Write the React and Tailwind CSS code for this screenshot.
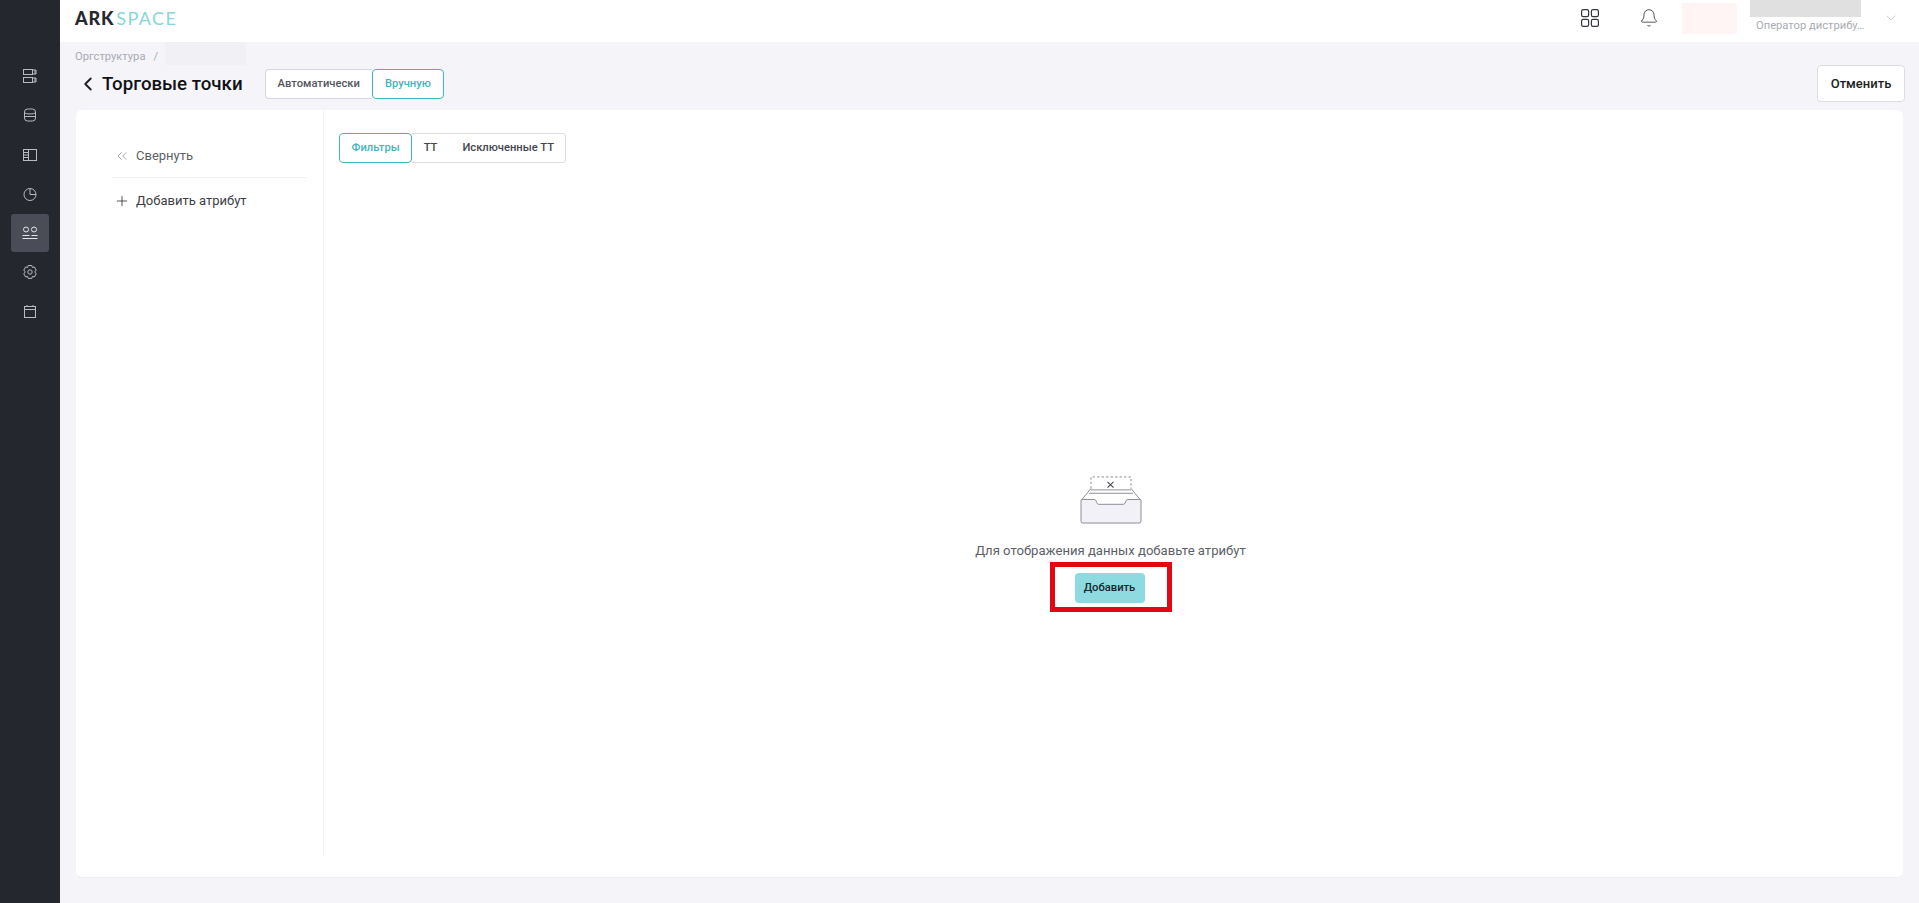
import { Bell, ChevronDown, ChevronLeft, ChevronsLeft, Plus } from "lucide-react";

const font = { fontFamily: "Roboto, sans-serif" };

function RowsIcon() {
  return (
    <svg width="18" height="18" viewBox="0 0 18 18" fill="none" stroke="currentColor" strokeWidth="1">
      <rect x="2.5" y="2.5" width="9" height="5" />
      <rect x="2.5" y="10.5" width="9" height="5" />
      <path d="M12 3h3v4h-3M12 11h3v4h-3M14 3v4M14 11v4" />
    </svg>
  );
}

function DbIcon() {
  return (
    <svg width="18" height="18" viewBox="0 0 18 18" fill="none" stroke="currentColor" strokeWidth="1">
      <rect x="3.5" y="3" width="11" height="12" rx="3" />
      <path d="M3.5 7c2 1.3 9 1.3 11 0M3.5 10.5h11" />
    </svg>
  );
}

function PanelIcon() {
  return (
    <svg width="18" height="18" viewBox="0 0 18 18" fill="none" stroke="currentColor" strokeWidth="1">
      <rect x="2.5" y="3.5" width="13" height="11" />
      <path d="M7.5 3.5v11M3 6.5h4M3 9h4M3 11.5h4" />
    </svg>
  );
}

function PieIcon() {
  return (
    <svg width="18" height="18" viewBox="0 0 18 18" fill="none" stroke="currentColor" strokeWidth="1">
      <circle cx="9" cy="9.5" r="6" />
      <path d="M9 3.5v6h6" />
    </svg>
  );
}

function UsersIcon() {
  return (
    <svg width="18" height="18" viewBox="0 0 18 18" fill="none" stroke="currentColor" strokeWidth="1">
      <circle cx="5" cy="5.5" r="2.5" />
      <circle cx="13" cy="5.5" r="2.5" />
      <path d="M1.5 11.5h7M1.5 14.5h15M10.5 11.5h6" />
    </svg>
  );
}

function GearIcon() {
  return (
    <svg width="18" height="18" viewBox="0 0 18 18" fill="none" stroke="currentColor" strokeWidth="1" strokeLinejoin="round">
      <path d="M7.2 2.5h3.6l.6 2 1.9-.6 1.9 3.1-1.4 1.9 1.4 2-1.9 3.1-1.9-.6-.6 2H7.2l-.6-2-1.9.6-1.9-3.1 1.4-2-1.4-1.9 1.9-3.1 1.9.6.6-2Z" />
      <circle cx="9" cy="9" r="2.2" />
    </svg>
  );
}

function CalendarIcon() {
  return (
    <svg width="18" height="18" viewBox="0 0 18 18" fill="none" stroke="currentColor" strokeWidth="1">
      <rect x="3.5" y="3.5" width="11" height="11" />
      <path d="M3.5 6.5h11M6 2v2M12 2v2" />
    </svg>
  );
}

function GridIcon() {
  return (
    <svg width="20" height="20" viewBox="0 0 20 20" fill="none" stroke="#33363d" strokeWidth="1.2">
      <rect x="1.6" y="1.6" width="7" height="7" rx="1.6" />
      <rect x="11.4" y="1.6" width="7" height="7" rx="1.6" />
      <rect x="1.6" y="11.4" width="7" height="7" rx="1.6" />
      <rect x="11.4" y="11.4" width="7" height="7" rx="1.6" />
    </svg>
  );
}

function EmptyIcon() {
  return (
    <svg width="62" height="48" viewBox="0 0 62 50" preserveAspectRatio="none" fill="none" stroke="#6f727b" strokeWidth="0.8">
      <path d="M11 1h40l1.5 19h-43L11 1Z" fill="#fff" stroke="none" />
      <path d="M11 13V1h40v12" strokeDasharray="2.5 2" />
      <path d="M11 13 1.5 25M51 13l9.5 12M9 18h44M11 14.5h40" />
      <path d="M1 25.5a1 1 0 0 1 1-1h12c1.5 0 2 1 2.5 2.5.4 1.5 1 2.5 2.5 2.5h24c1.5 0 2.1-1 2.5-2.5.5-1.5 1-2.5 2.5-2.5h12a1 1 0 0 1 1 1V47a2 2 0 0 1-2 2H3a2 2 0 0 1-2-2V25.5Z" fill="#f1f1f7" />
      <path d="M27.5 7l6 6M33.5 7l-6 6" strokeWidth="1.1" stroke="#44474e" transform="translate(0 -1)" />
    </svg>
  );
}

const navItems = [
  { Icon: RowsIcon },
  { Icon: DbIcon },
  { Icon: PanelIcon },
  { Icon: PieIcon },
  { Icon: UsersIcon, active: true },
  { Icon: GearIcon },
  { Icon: CalendarIcon },
];

function Sidebar() {
  return (
    <aside className="flex w-[60px] shrink-0 flex-col items-center bg-[#24272d] pt-[57px] text-[#b9bbc1]">
      {navItems.map(({ Icon, active }, i) => (
        <div
          key={i}
          className={`mb-[1.3px] flex h-[38px] w-[38px] items-center justify-center rounded-[3px] ${active ? "bg-[#4a4c58] text-[#e4e5e9]" : ""}`}
        >
          <Icon />
        </div>
      ))}
    </aside>
  );
}

function Header() {
  return (
    <header className="flex h-[42px] shrink-0 items-center bg-white pl-[15px]">
      <div className="mb-[6px] flex items-baseline text-[18px] leading-[36px]" style={{ fontFamily: "Lato, sans-serif" }}>
        <span className="font-black tracking-[0.8px] text-[#26282d]">ARK</span>
        <span className="ml-[2px] font-normal tracking-[1.4px] text-[#86d6dc]">SPACE</span>
      </div>
      <div className="ml-auto flex h-full items-center pb-[6px]">
        <GridIcon />
        <Bell size={20} strokeWidth={1} color="#33363d" className="ml-[39px]" />
        <div className="ml-[23px] h-[31px] w-[55px] bg-[#fff5f5]" />
        <div className="ml-[13px] flex h-[42px] w-[133px] flex-col self-start">
          <div className="relative h-[17px] w-[111px] bg-[#e0e0e0]" />
          <div className="ml-[6px] mt-[1px] whitespace-nowrap text-[11.2px] leading-[16px] text-[#a9abb4]">Оператор дистрибу…</div>
        </div>
        <ChevronDown size={16} strokeWidth={1} color="#b5b7bf" className="mr-[20px]" />
      </div>
    </header>
  );
}

function TitleBar() {
  return (
    <div className="flex h-[41px] items-center pr-[14px] pl-[17px]">
      <ChevronLeft size={22} strokeWidth={2} color="#1c1e22" />
      <h1 className="ml-[3px] text-[18.7px] font-medium leading-[28px] text-[#111216]">Торговые точки</h1>
      <div className="ml-[22px] flex h-[30px] items-stretch text-[11.2px] font-medium">
        <button className="rounded-l-[4px] border border-r-0 border-[#d5d6df] bg-white px-[12px] pt-[1px] text-[#54565e]">Автоматически</button>
        <button className="rounded-[4px] border border-[#45b4bd] bg-white px-[12px] pt-[1px] text-[#45b4bd]">Вручную</button>
      </div>
      <button className="ml-auto h-[37px] w-[88px] rounded-[4px] border border-[#dcdde3] bg-white text-[13px] font-medium text-[#1c1e22]">Отменить</button>
    </div>
  );
}

function AttrPanel() {
  return (
    <div className="w-[248px] shrink-0 self-stretch pb-[22px]">
      <div className="h-full border-r border-[#f4f4f7] pt-[34px] pl-[36px] pr-[16px] text-[13px] leading-[22px]">
        <div className="flex h-[34px] items-center border-b border-[#f2f2f5] pb-[10px] pl-[1.5px] text-[#5c5f68]">
          <ChevronsLeft size={16} strokeWidth={1} color="#6f727b" className="mr-[6.5px]" />
          Свернуть
        </div>
        <div className="mt-[12px] flex items-center pl-[1.5px] text-[#3c3e45]">
          <Plus size={16} strokeWidth={1.2} color="#2b2d33" className="mr-[6.5px]" />
          Добавить атрибут
        </div>
      </div>
    </div>
  );
}

function Tabs() {
  return (
    <div className="flex h-[30px] self-start text-[11.2px] font-medium">
      <button className="rounded-[4px] border border-[#45b4bd] px-[11.5px] pt-[1px] text-[#45b4bd]">Фильтры</button>
      <div className="flex items-center rounded-r-[4px] border border-l-0 border-[#dcdde3] pt-[1px] pr-[11px] pl-[11.5px] text-[#44464e]">
        <span>ТТ</span>
        <span className="ml-[25px]">Исключенные ТТ</span>
      </div>
    </div>
  );
}

function EmptyState() {
  return (
    <div className="flex flex-1 flex-col items-center pt-[313px]">
      <EmptyIcon />
      <p className="mt-[17px] text-[13.1px] leading-[20px] text-[#5c5f68]">Для отображения данных добавьте атрибут</p>
      <div className="mt-[1px] border-[5px] border-[#e30613] pt-[6px] pr-[22px] pb-[4px] pl-[20px]">
        <button className="block h-[30px] w-[70px] rounded-[4px] bg-[#8ddbe1] text-[11.2px] font-medium text-[#15262c]">Добавить</button>
      </div>
    </div>
  );
}

export default function App() {
  return (
    <div className="flex h-[903px] bg-[#f4f4f9]" style={font}>
      <Sidebar />
      <div className="flex min-w-0 flex-1 flex-col">
        <Header />
        <div className="flex h-[21px] pl-[15px] text-[11.2px] leading-[16px] text-[#a9abb4]">
          <span className="pt-[7px]">Оргструктура</span>
          <span className="ml-[8px] pt-[7px]">/</span>
          <div className="ml-[7px] h-[23px] w-[81px] bg-[#f0f0f5]" />
        </div>
        <TitleBar />
        <main className="mx-[16px] mt-[6px] mb-[25px] flex flex-1 rounded-[6px] border-b border-[#efeff3] bg-white">
          <AttrPanel />
          <div className="flex flex-1 flex-col pt-[23px] pr-[21px] pl-[15px]">
            <Tabs />
            <EmptyState />
          </div>
        </main>
      </div>
    </div>
  );
}
